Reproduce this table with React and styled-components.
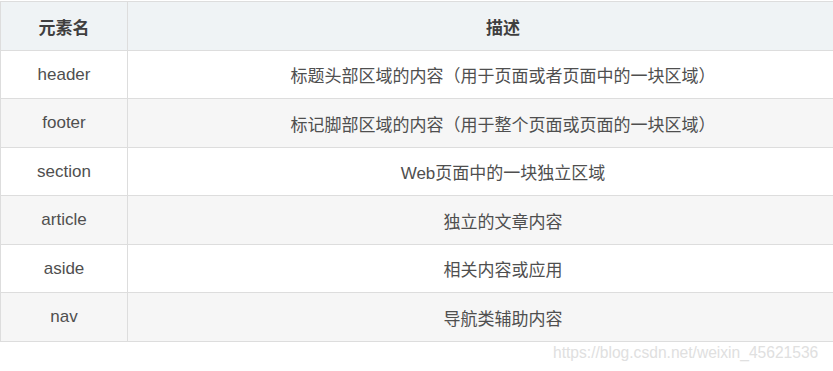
import React from 'react'
import styled, { createGlobalStyle } from 'styled-components'

const rows = [
    { name: 'header', desc: '标题头部区域的内容（用于页面或者页面中的一块区域）' },
    { name: 'footer', desc: '标记脚部区域的内容（用于整个页面或页面的一块区域）' },
    { name: 'section', desc: 'Web页面中的一块独立区域' },
    { name: 'article', desc: '独立的文章内容' },
    { name: 'aside', desc: '相关内容或应用' },
    { name: 'nav', desc: '导航类辅助内容' },
]

const App = () => {
    return (
        <>
            <GlobalStyle />
            <Page>
                <Table>
                    <HeadCell>元素名</HeadCell>
                    <HeadCell>描述</HeadCell>
                    {rows.map((row, i) => (
                        <React.Fragment key={row.name}>
                            <Cell $striped={i % 2 === 1}>{row.name}</Cell>
                            <Cell $striped={i % 2 === 1}>{row.desc}</Cell>
                        </React.Fragment>
                    ))}
                </Table>
                <Watermark>https://blog.csdn.net/weixin_45621536</Watermark>
            </Page>
        </>
    )
}

export default App

const GlobalStyle = createGlobalStyle`
    body {
        margin: 0;
        background: #fff;
        overflow: hidden;
        font-family: 'Liberation Sans', 'Noto Sans CJK SC', sans-serif;
    }
`
const Page = styled.div`
    position: relative;
    width: 833px;
    height: 371px;
    padding-top: 1px;
    box-sizing: border-box;
    overflow: hidden;
`
const Table = styled.div`
    display: grid;
    grid-template-columns: 127px 751px;
    grid-template-rows: 49px 48px 49px 48px 49px 48px 49px;
    width: 879px;
    border-top: 1px solid #dddddd;
    border-left: 1px solid #dddddd;
`
const Cell = styled.div`
    display: flex;
    align-items: center;
    justify-content: center;
    box-sizing: border-box;
    height: 100%;
    border-right: 1px solid #dddddd;
    border-bottom: 1px solid #dddddd;
    background: ${p => (p.$striped ? '#f6f6f6' : '#ffffff')};
    color: #4f4f4f;
    font-size: 17px;
    white-space: nowrap;
`
const HeadCell = styled(Cell)`
    background: #eff3f5;
    color: #3f3f3f;
    font-weight: bold;
`
const Watermark = styled.div`
    position: absolute;
    left: 553px;
    top: 344px;
    font-size: 15.6px;
    color: #e0e0e0;
    white-space: nowrap;
`
